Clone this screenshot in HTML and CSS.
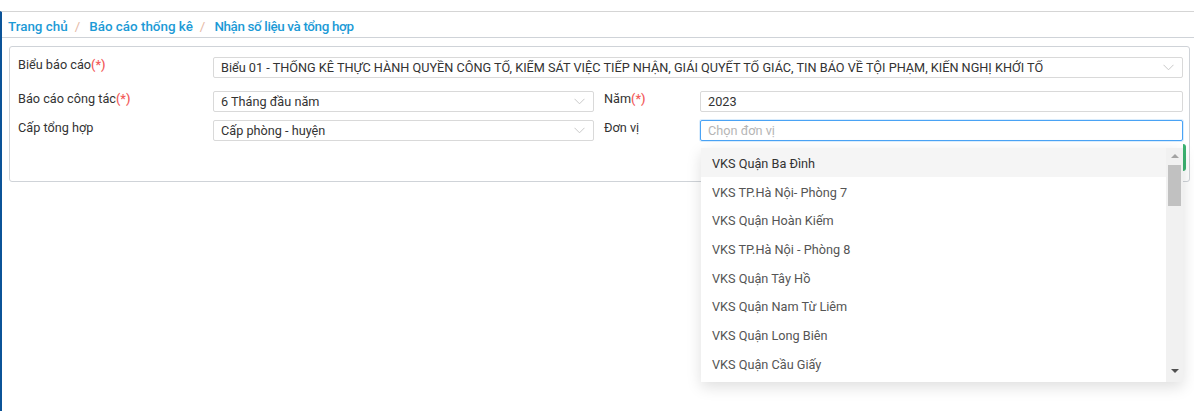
FILE: index.html
```html
<!DOCTYPE html>
<html lang="vi">
<head>
<meta charset="utf-8">
<link rel="stylesheet" href="styles.css">
</head>
<body>
<div class="app">
  <nav class="crumbs">
    <a class="crumb">Trang chủ</a><span class="sep">/</span>
    <a class="crumb">Báo cáo thống kê</a><span class="sep">/</span>
    <a class="crumb current">Nhận số liệu và tổng hợp</a>
  </nav>
  <section class="card">
    <div class="form">
      <label class="lbl">Biểu báo cáo<span class="req">(*)</span></label>
      <div class="select wide">
        <span class="val">Biểu 01 - THỐNG KÊ THỰC HÀNH QUYỀN CÔNG TỐ, KIỂM SÁT VIỆC TIẾP NHẬN, GIẢI QUYẾT TỐ GIÁC, TIN BÁO VỀ TỘI PHẠM, KIẾN NGHỊ KHỞI TỐ</span>
        <svg class="chev" width="11" height="7" viewBox="0 0 11 7"><path d="M0.5 0.8 L5.5 5.8 L10.5 0.8" fill="none" stroke="#c8c8c8" stroke-width="1"/></svg>
      </div>

      <label class="lbl">Báo cáo công tác<span class="req">(*)</span></label>
      <div class="select">
        <span class="val">6 Tháng đầu năm</span>
        <svg class="chev" width="11" height="7" viewBox="0 0 11 7"><path d="M0.5 0.8 L5.5 5.8 L10.5 0.8" fill="none" stroke="#c8c8c8" stroke-width="1"/></svg>
      </div>
      <label class="lbl lbl2">Năm<span class="req">(*)</span></label>
      <div class="input"><span class="val">2023</span></div>

      <label class="lbl">Cấp tổng hợp</label>
      <div class="select">
        <span class="val">Cấp phòng - huyện</span>
        <svg class="chev" width="11" height="7" viewBox="0 0 11 7"><path d="M0.5 0.8 L5.5 5.8 L10.5 0.8" fill="none" stroke="#c8c8c8" stroke-width="1"/></svg>
      </div>
      <label class="lbl lbl2">Đơn vị</label>
      <div class="combo">
        <div class="input focus"><span class="ph">Chọn đơn vị</span></div>
        <div class="dropdown">
          <ul class="list">
            <li class="item active">VKS Quận Ba Đình</li>
            <li class="item">VKS TP.Hà Nội- Phòng 7</li>
            <li class="item">VKS Quận Hoàn Kiếm</li>
            <li class="item">VKS TP.Hà Nội - Phòng 8</li>
            <li class="item">VKS Quận Tây Hồ</li>
            <li class="item">VKS Quận Nam Từ Liêm</li>
            <li class="item">VKS Quận Long Biên</li>
            <li class="item">VKS Quận Cầu Giấy</li>
          </ul>
          <div class="scrollbar">
            <span class="arr up"></span>
            <span class="thumb"></span>
            <span class="arr down"></span>
          </div>
        </div>
      </div>
    </div>
    <div class="actions">
      <button class="btn">Tổng hợp</button>
    </div>
  </section>
</div>
</body>
</html>
```

FILE: styles.css
```css
* { box-sizing: border-box; }
html, body { margin: 0; padding: 0; background: #fff; }
body {
  font-family: Roboto, "Noto Sans", sans-serif;
  font-size: 12.7px;
  color: #333;
  height: 411px;
  overflow: hidden;
}
.app {
  margin-top: 11px;
  border-top: 1px solid #d5d5d5;
  border-left: 2px solid #0b5398;
  height: 400px;
}
.crumbs {
  height: 26px;
  border-bottom: 1px solid #cfd3d8;
  display: flex;
  align-items: center;
  padding: 3px 0 0 6px;
  font-size: 13.4px;
  font-weight: 500;
  color: #1c9ad6;
}
.crumb { color: #1c9ad6; }
.crumb.current { letter-spacing: -0.35px; }
.sep {
  color: #e6b9a6;
  font-weight: 400;
  margin: 0 9px 0 7px;
}
.card {
  margin: 8px 4px 0 7px;
  border: 1px solid #cfd3d8;
  border-radius: 3px;
  padding: 10px 6px 10px 8px;
}
.form {
  display: grid;
  grid-template-columns: 195px 381px 106px 1fr;
  row-gap: 8px;
}
.lbl {
  line-height: 16px;
  padding-top: 0;
  color: #333;
  white-space: nowrap;
}
.lbl2 { padding-left: 10px; }
.req { color: #f25b5b; font-weight: 500; }
.select, .input {
  height: 21px;
  border: 1px solid #d9d9d9;
  border-radius: 2px;
  display: flex;
  align-items: center;
  padding: 0 8px 0 7px;
  background: #fff;
  position: relative;
}
.wide { grid-column: 2 / 5; margin-bottom: 4.5px; }
.val {
  flex: 1;
  white-space: nowrap;
  overflow: hidden;
  color: #333;
}
.chev { flex: none; margin-left: 6px; }
.input { padding-left: 7px; }
.focus { border-color: #4aa3f5; box-shadow: 0 0 0 1px rgba(74,163,245,0.2); }
.ph { color: #b5b5b5; }
.combo { position: relative; }
.dropdown {
  position: absolute;
  top: 28.5px;
  left: 1px;
  right: 0;
  height: 234px;
  background: #fff;
  box-shadow: 0 5px 14px rgba(0,0,0,0.13);
  display: flex;
  z-index: 5;
}
.list {
  list-style: none;
  margin: 0;
  padding: 0;
  flex: 1;
}
.item {
  height: 28.7px;
  line-height: 25.7px;
  padding: 3px 0 0 11px;
  color: #555;
  white-space: nowrap;
}
.item.active { background: #f5f5f5; color: #333; }
.scrollbar {
  width: 17px;
  background: #f1f1f1;
  display: flex;
  flex-direction: column;
  align-items: center;
}
.arr {
  width: 0; height: 0;
  border-left: 4px solid transparent;
  border-right: 4px solid transparent;
}
.arr.up { border-bottom: 4px solid #a3a3a3; margin-top: 6px; }
.arr.down { border-top: 4px solid #505050; margin-top: auto; margin-bottom: 9px; }
.thumb {
  width: 13px;
  height: 41px;
  background: #c1c1c1;
  margin-top: 7px;
}
.actions {
  display: flex;
  justify-content: flex-end;
  margin-top: 3px;
  margin-right: -3px;
}
.btn {
  height: 27px;
  padding: 0 14px;
  border: none;
  border-right: 3px solid #3cb371;
  background: #fff;
  color: #3cb371;
  border-radius: 3px;
  font-family: inherit;
  font-size: 13px;
}
```
